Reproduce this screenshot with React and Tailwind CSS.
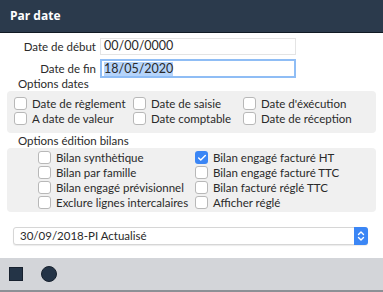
import { Check } from 'lucide-react'

const DATE_OPTS = [
  ['Date de règlement', 'Date de saisie', "Date d'éxécution"],
  ['A date de valeur', 'Date comptable', 'Date de réception'],
]

const BILAN_LEFT = ['Bilan synthètique', 'Bilan par famille', 'Bilan engagé prévisionnel', 'Exclure lignes intercalaires']
const BILAN_RIGHT = ['Bilan engagé facturé HT', 'Bilan engagé facturé TTC', 'Bilan facturé réglé TTC', 'Afficher réglé']

function Box({ checked }) {
  if (checked) {
    return (
      <span className="w-[13px] h-[13px] rounded-[3px] bg-[#3b86f5] flex items-center justify-center shrink-0">
        <Check size={10} strokeWidth={3.5} className="text-white" />
      </span>
    )
  }
  return <span className="w-[13px] h-[13px] rounded-[3px] bg-white border border-[#b8b8b8] shrink-0" />
}

function Opt({ label, checked, className = '' }) {
  return (
    <div className={`flex items-center gap-[5px] h-[15px] shrink-0 ${className}`}>
      <Box checked={checked} />
      <span className="text-[11.5px] text-[#2a2a2a] leading-none whitespace-nowrap">{label}</span>
    </div>
  )
}

export default function App() {
  return (
    <div className="w-[383px] h-[292px] bg-white flex flex-col overflow-hidden" style={{ fontFamily: 'Lato, "Open Sans", sans-serif' }}>
      {/* header */}
      <div className="h-[33px] bg-[#2b3a4c] border-b border-[#111a24] flex items-center px-[10px] shrink-0">
        <span className="text-white text-[12px] font-bold" style={{ fontFamily: '"Open Sans", sans-serif' }}>Par date</span>
      </div>

      <div className="flex-1 flex flex-col px-[7px]">
        <div className="flex items-center mt-[5px] h-[17px]">
          <span className="w-[93px] text-right text-[11.5px] text-[#2a2a2a] pr-[4px]">Date de début</span>
          <div className="w-[196px] h-[17px] border border-[#e4e4e4] flex items-center px-[3px] text-[12.5px] text-[#2a2a2a]">00/00/0000</div>
        </div>
        <div className="flex items-center mt-[4px] h-[19px]">
          <span className="w-[93px] text-right text-[11.5px] text-[#2a2a2a] pr-[4px]">Date de fin</span>
          <div className="w-[196px] h-[19px] border-2 border-[#8fbdf5] flex items-center px-[2px] text-[12.5px] text-[#2a2a2a]">
            <span className="bg-[#b5d4fb] leading-[14px]">18/05/2020</span>
          </div>
        </div>

        <div className="text-[11.5px] text-[#2a2a2a] pl-[11px] -mt-[1px] leading-[14px]">Options dates</div>
        <div className="bg-[#f0f0f0] rounded-[4px] h-[42px] pl-[7px] pt-[5px] flex flex-col">
          {DATE_OPTS.map((row, i) => (
            <div key={i} className="flex">
              <Opt label={row[0]} className="w-[119px]" />
              <Opt label={row[1]} className="w-[110px]" />
              <Opt label={row[2]} />
            </div>
          ))}
        </div>

        <div className="text-[11.5px] text-[#2a2a2a] pl-[11px] mt-[1px] leading-[14px]">Options édition bilans</div>
        <div className="bg-[#f0f0f0] rounded-[4px] h-[64px] pl-[31px] pt-[2px] flex">
          <div className="w-[157px] flex flex-col">
            {BILAN_LEFT.map(l => <Opt key={l} label={l} />)}
          </div>
          <div className="flex flex-col">
            {BILAN_RIGHT.map((l, i) => <Opt key={l} label={l} checked={i === 0} />)}
          </div>
        </div>

        <div className="mt-[15px] ml-[6px] w-[355px] h-[18px] bg-white border border-[#d6d6d6] rounded-[3px] shadow-[0_1px_1px_rgba(0,0,0,0.08)] flex items-center justify-between">
          <span className="text-[11.5px] text-[#2a2a2a] pl-[6px]">30/09/2018-PI Actualisé</span>
          <span className="w-[14px] h-[18px] -mr-px bg-[#3b86f5] rounded-r-[3px] flex items-center justify-center">
            <svg width="8" height="12" viewBox="0 0 8 12" fill="none" stroke="white" strokeWidth="1.4" strokeLinecap="round" strokeLinejoin="round">
              <path d="M1.5 4.5 L4 2 L6.5 4.5" />
              <path d="M1.5 7.5 L4 10 L6.5 7.5" />
            </svg>
          </span>
        </div>
      </div>

      {/* footer */}
      <div className="h-[34px] bg-[#d3d5d9] border-b-2 border-[#8d9096] flex items-center pl-[9px] gap-[18px] shrink-0">
        <span className="w-[14px] h-[14px] bg-[#243447] border border-[#17212e]" />
        <span className="w-[16px] h-[16px] rounded-full bg-[#243447] border border-[#17212e]" />
      </div>
    </div>
  )
}
